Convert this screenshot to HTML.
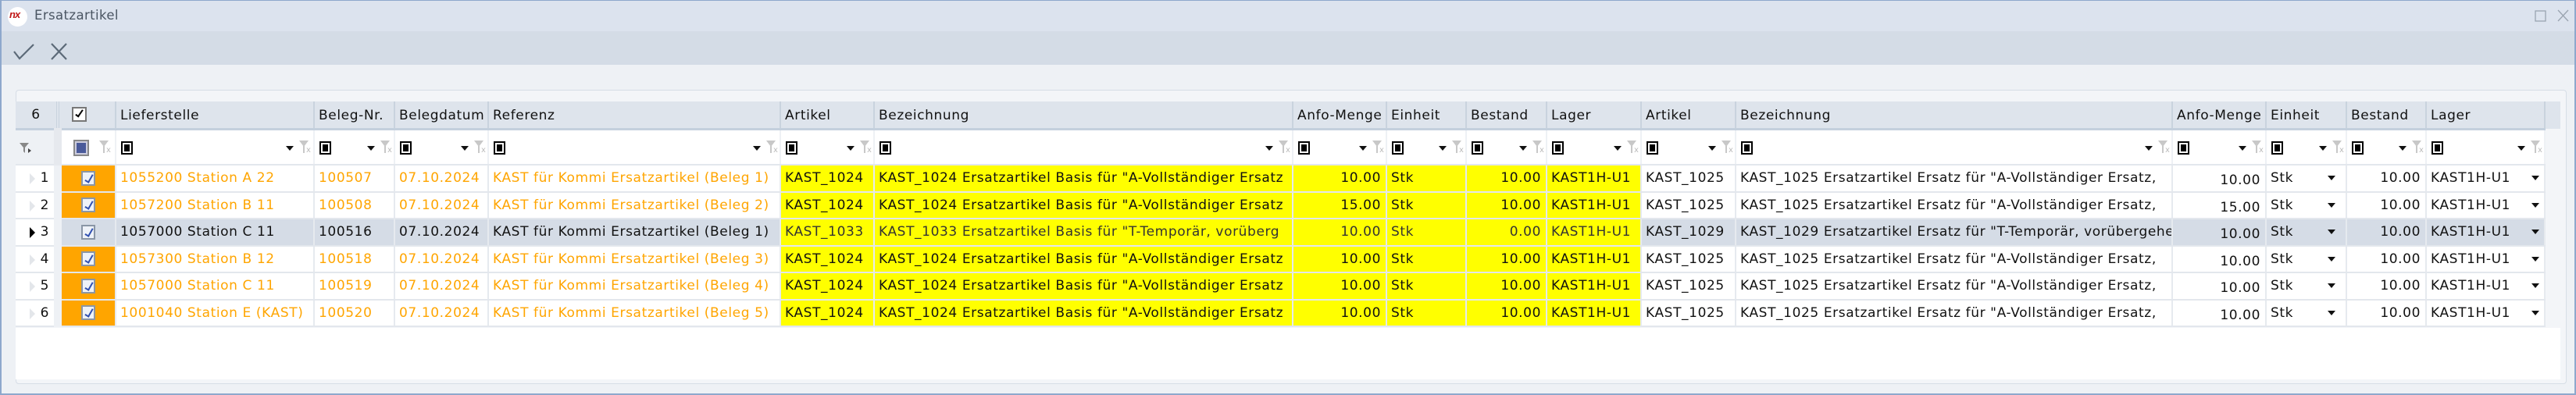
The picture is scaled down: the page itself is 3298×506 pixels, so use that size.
<!DOCTYPE html>
<html><head><meta charset="utf-8"><style>
*{box-sizing:border-box;margin:0;padding:0}
body{width:3298px;height:506px;overflow:hidden;background:#EEF1F5;font-family:"DejaVu Sans","Liberation Sans",sans-serif;position:relative}
.abs{position:absolute}
#win{position:absolute;left:0;top:0;width:3298px;height:506px;border:2px solid #8EA8CC;border-top:1px solid #8EA8CC}
#title{left:2px;top:1px;width:3294px;height:39px;background:#DCE3EE}
#tool{left:2px;top:40px;width:3294px;height:43px;background:#D4DCE6}
#panel{left:20px;top:115px;width:3266px;height:377px;border:1px solid #D6DDE6;border-radius:4px;background:#F3F5F8}
table{position:absolute;left:20px;top:130px;width:3238px;border-collapse:collapse;table-layout:fixed;font-size:17px;letter-spacing:.6px}
td,th{overflow:hidden;white-space:nowrap;padding:0 0 0 5px;font-weight:normal;text-align:left}
th{background:#DEE4EC;height:35px;border-right:2px solid #C9D3DE;border-bottom:3px solid #C4D0DD;color:#111;vertical-align:top;padding-top:8px}
tr.f td{height:46px;background:#fff;border-right:2px solid #EEF1F5;border-bottom:2px solid #E3E7ED;position:relative}
tr.d td{height:34.5px;border-right:2px solid #E6EAEF;border-bottom:2px solid #E3E7ED;color:#111;background:#fff}
tr.d td.o{color:#FFA500}
tr.d td.y{background:#FFFF00}
tr.d td.cb{background:#FFA500;text-align:center;padding:0}
tr.s td{background:#D5DCE6!important;color:#111!important}
tr.s td.y{background:#FFFF00!important;color:#333!important}
tr.d td.ind{background:#fff;border-right:10px solid #EEF1F5;text-align:right;padding-right:6px;position:relative}
.r{text-align:right!important;padding-right:6px!important}
.chk{display:inline-block;width:18px;height:19px;border:2px solid #8a96a6;background:#EEF2F8;vertical-align:middle;position:relative}
.chk:after{content:"";position:absolute;left:5px;top:1px;width:4px;height:10px;border:solid #3050B0;border-width:0 2px 2px 0;transform:rotate(30deg)}
.fb{position:absolute;left:6px;top:14px;width:15px;height:17px;border:2px solid #000;background:#fff}
.fb:after{content:"";position:absolute;left:2px;top:2px;width:7px;height:9px;background:#000}
.dd{position:absolute;top:20px;width:0;height:0;border-left:5px solid transparent;border-right:5px solid transparent;border-top:6px solid #111}
.fn{position:absolute;top:13px;width:16px;height:20px;color:#bbb;font-size:12px}
.fn:before{content:"";position:absolute;left:0;top:0;width:0;height:0;border-left:6px solid transparent;border-right:6px solid transparent;border-top:8px solid #c8c8c8}
.fn:after{content:"";position:absolute;left:5px;top:7px;width:2px;height:9px;background:#c8c8c8}
.fn i{position:absolute;left:9px;top:7px;font-style:normal;font-size:10px;color:#bbb;letter-spacing:0}
.tri{position:absolute;left:18px;top:10px;width:0;height:0;border-top:7px solid transparent;border-bottom:7px solid transparent;border-left:7px solid #E3E6EA}
.tri.b{border-left-color:#000}
.ad{display:inline-block;width:0;height:0;border-left:5px solid transparent;border-right:5px solid transparent;border-top:6px solid #111;position:absolute;top:13px}
</style></head><body>
<div id="win"></div>
<div id="title" class="abs"></div>
<div class="abs" style="left:10px;top:9px;width:25px;height:25px;border-radius:50%;background:#fff"></div>
<div class="abs" style="left:12px;top:11px;font:italic bold 13px 'Liberation Sans',sans-serif;color:#C01818;letter-spacing:-1px">nx</div>
<div class="abs" style="left:44px;top:10px;font-size:16.5px;color:#4A5562;letter-spacing:.4px">Ersatzartikel</div>
<svg class="abs" style="left:3240px;top:10px" width="50" height="20"><rect x="6" y="4" width="13" height="13" fill="none" stroke="#9aa4b0" stroke-width="1.3"/><path d="M35 3 L48 17 M48 3 L35 17" stroke="#9aa4b0" stroke-width="1.3"/></svg>
<div id="tool" class="abs"></div>
<svg class="abs" style="left:14px;top:52px" width="80" height="30"><path d="M4 14 L11 23 L29 5" fill="none" stroke="#5C6A78" stroke-width="2.2"/><path d="M52 4 L71 24 M71 4 L52 24" stroke="#5C6A78" stroke-width="2.2"/></svg>
<div id="panel" class="abs"></div>
<div class="abs" style="left:20px;top:130px;width:3258px;height:35px;background:#DEE4EC"></div>
<div class="abs" style="left:20px;top:166px;width:3258px;height:290px;background:#F3F5F8"></div>
<table>
<colgroup><col style="width:54px"><col style="width:74px"><col style="width:254px"><col style="width:103px"><col style="width:120px"><col style="width:374px"><col style="width:120px"><col style="width:536px"><col style="width:120px"><col style="width:102px"><col style="width:103px"><col style="width:121px"><col style="width:121px"><col style="width:559px"><col style="width:120px"><col style="width:103px"><col style="width:102px"><col style="width:152px"></colgroup>
<tr><th style="text-align:center;padding:0;vertical-align:middle;border-right:4px double #C9D3DE">6</th><th style="padding-left:16px;vertical-align:middle;padding-top:0"><span style="display:inline-block;width:19px;height:19px;border:2px solid #777;background:#fff;position:relative;vertical-align:middle"><span style="position:absolute;left:5px;top:0;width:5px;height:11px;border:solid #000;border-width:0 2.5px 2.5px 0;transform:rotate(35deg)"></span></span></th>
<th>Lieferstelle</th><th>Beleg-Nr.</th><th>Belegdatum</th><th>Referenz</th><th>Artikel</th><th>Bezeichnung</th><th>Anfo-Menge</th><th>Einheit</th><th>Bestand</th><th>Lager</th><th>Artikel</th><th>Bezeichnung</th><th>Anfo-Menge</th><th>Einheit</th><th>Bestand</th><th>Lager</th></tr>
<tr class="f"><td style="background:#EEF1F5;border-right:10px solid #E6E9EE"><svg style="position:absolute;left:4px;top:14px" width="18" height="18"><path d="M1 2 H13 L8 8 V15 L6 13 V8 Z" fill="#888"/><path d="M12 9 L16 12 L12 15Z" fill="#444"/></svg></td>
<td><span style="position:absolute;left:15px;top:12px;width:20px;height:21px;border:2px solid #888;background:#ccd"><span style="position:absolute;left:2px;top:2px;width:12px;height:13px;background:#4A5A9A"></span></span><span class="fn" style="left:48px"><i>x</i></span></td>
<td><span class="fb"></span><span class="dd" style="left:217px"></span><span class="fn" style="left:234px"><i>x</i></span></td>
<td><span class="fb"></span><span class="dd" style="left:67px"></span><span class="fn" style="left:84px"><i>x</i></span></td>
<td><span class="fb"></span><span class="dd" style="left:84px"></span><span class="fn" style="left:101px"><i>x</i></span></td>
<td><span class="fb"></span><span class="dd" style="left:338px"></span><span class="fn" style="left:355px"><i>x</i></span></td>
<td><span class="fb"></span><span class="dd" style="left:84px"></span><span class="fn" style="left:101px"><i>x</i></span></td>
<td><span class="fb"></span><span class="dd" style="left:500px"></span><span class="fn" style="left:517px"><i>x</i></span></td>
<td><span class="fb"></span><span class="dd" style="left:84px"></span><span class="fn" style="left:101px"><i>x</i></span></td>
<td><span class="fb"></span><span class="dd" style="left:66px"></span><span class="fn" style="left:83px"><i>x</i></span></td>
<td><span class="fb"></span><span class="dd" style="left:67px"></span><span class="fn" style="left:84px"><i>x</i></span></td>
<td><span class="fb"></span><span class="dd" style="left:85px"></span><span class="fn" style="left:102px"><i>x</i></span></td>
<td><span class="fb"></span><span class="dd" style="left:85px"></span><span class="fn" style="left:102px"><i>x</i></span></td>
<td><span class="fb"></span><span class="dd" style="left:523px"></span><span class="fn" style="left:540px"><i>x</i></span></td>
<td><span class="fb"></span><span class="dd" style="left:84px"></span><span class="fn" style="left:101px"><i>x</i></span></td>
<td><span class="fb"></span><span class="dd" style="left:67px"></span><span class="fn" style="left:84px"><i>x</i></span></td>
<td><span class="fb"></span><span class="dd" style="left:66px"></span><span class="fn" style="left:83px"><i>x</i></span></td>
<td><span class="fb"></span><span class="dd" style="left:116px"></span><span class="fn" style="left:133px"><i>x</i></span></td></tr>

<tr class="d"><td class="ind"><span class="tri"></span>1</td><td class="cb"><span class="chk"></span></td><td class="o">1055200 Station A 22</td><td class="o">100507</td><td class="o">07.10.2024</td><td class="o">KAST für Kommi Ersatzartikel (Beleg 1)</td><td class="y">KAST_1024</td><td class="y">KAST_1024 Ersatzartikel Basis für "A-Vollständiger Ersatz</td><td class="y r">10.00</td><td class="y">Stk</td><td class="y r">10.00</td><td class="y">KAST1H-U1</td><td>KAST_1025</td><td>KAST_1025 Ersatzartikel Ersatz für "A-Vollständiger Ersatz,</td><td class="r" style="padding-top:6px">10.00</td><td style="position:relative">Stk<span class="ad" style="left:78px"></span></td><td class="r">10.00</td><td style="position:relative">KAST1H-U1<span class="ad" style="left:134px"></span></td></tr>
<tr class="d"><td class="ind"><span class="tri"></span>2</td><td class="cb"><span class="chk"></span></td><td class="o">1057200 Station B 11</td><td class="o">100508</td><td class="o">07.10.2024</td><td class="o">KAST für Kommi Ersatzartikel (Beleg 2)</td><td class="y">KAST_1024</td><td class="y">KAST_1024 Ersatzartikel Basis für "A-Vollständiger Ersatz</td><td class="y r">15.00</td><td class="y">Stk</td><td class="y r">10.00</td><td class="y">KAST1H-U1</td><td>KAST_1025</td><td>KAST_1025 Ersatzartikel Ersatz für "A-Vollständiger Ersatz,</td><td class="r" style="padding-top:6px">15.00</td><td style="position:relative">Stk<span class="ad" style="left:78px"></span></td><td class="r">10.00</td><td style="position:relative">KAST1H-U1<span class="ad" style="left:134px"></span></td></tr>
<tr class="d s"><td class="ind" style="background:#fff!important"><span class="tri b"></span>3</td><td class="cb"><span class="chk"></span></td><td>1057000 Station C 11</td><td>100516</td><td>07.10.2024</td><td>KAST für Kommi Ersatzartikel (Beleg 1)</td><td class="y">KAST_1033</td><td class="y">KAST_1033 Ersatzartikel Basis für "T-Temporär, vorüberg</td><td class="y r">10.00</td><td class="y">Stk</td><td class="y r">0.00</td><td class="y">KAST1H-U1</td><td>KAST_1029</td><td>KAST_1029 Ersatzartikel Ersatz für "T-Temporär, vorübergehend</td><td class="r" style="padding-top:6px">10.00</td><td style="position:relative">Stk<span class="ad" style="left:78px"></span></td><td class="r">10.00</td><td style="position:relative">KAST1H-U1<span class="ad" style="left:134px"></span></td></tr>
<tr class="d"><td class="ind"><span class="tri"></span>4</td><td class="cb"><span class="chk"></span></td><td class="o">1057300 Station B 12</td><td class="o">100518</td><td class="o">07.10.2024</td><td class="o">KAST für Kommi Ersatzartikel (Beleg 3)</td><td class="y">KAST_1024</td><td class="y">KAST_1024 Ersatzartikel Basis für "A-Vollständiger Ersatz</td><td class="y r">10.00</td><td class="y">Stk</td><td class="y r">10.00</td><td class="y">KAST1H-U1</td><td>KAST_1025</td><td>KAST_1025 Ersatzartikel Ersatz für "A-Vollständiger Ersatz,</td><td class="r" style="padding-top:6px">10.00</td><td style="position:relative">Stk<span class="ad" style="left:78px"></span></td><td class="r">10.00</td><td style="position:relative">KAST1H-U1<span class="ad" style="left:134px"></span></td></tr>
<tr class="d"><td class="ind"><span class="tri"></span>5</td><td class="cb"><span class="chk"></span></td><td class="o">1057000 Station C 11</td><td class="o">100519</td><td class="o">07.10.2024</td><td class="o">KAST für Kommi Ersatzartikel (Beleg 4)</td><td class="y">KAST_1024</td><td class="y">KAST_1024 Ersatzartikel Basis für "A-Vollständiger Ersatz</td><td class="y r">10.00</td><td class="y">Stk</td><td class="y r">10.00</td><td class="y">KAST1H-U1</td><td>KAST_1025</td><td>KAST_1025 Ersatzartikel Ersatz für "A-Vollständiger Ersatz,</td><td class="r" style="padding-top:6px">10.00</td><td style="position:relative">Stk<span class="ad" style="left:78px"></span></td><td class="r">10.00</td><td style="position:relative">KAST1H-U1<span class="ad" style="left:134px"></span></td></tr>
<tr class="d"><td class="ind"><span class="tri"></span>6</td><td class="cb"><span class="chk"></span></td><td class="o">1001040 Station E (KAST)</td><td class="o">100520</td><td class="o">07.10.2024</td><td class="o">KAST für Kommi Ersatzartikel (Beleg 5)</td><td class="y">KAST_1024</td><td class="y">KAST_1024 Ersatzartikel Basis für "A-Vollständiger Ersatz</td><td class="y r">10.00</td><td class="y">Stk</td><td class="y r">10.00</td><td class="y">KAST1H-U1</td><td>KAST_1025</td><td>KAST_1025 Ersatzartikel Ersatz für "A-Vollständiger Ersatz,</td><td class="r" style="padding-top:6px">10.00</td><td style="position:relative">Stk<span class="ad" style="left:78px"></span></td><td class="r">10.00</td><td style="position:relative">KAST1H-U1<span class="ad" style="left:134px"></span></td></tr>
</table>
<div class="abs" style="left:20px;top:420px;width:3258px;height:66px;background:#fff"></div>
</body></html>
